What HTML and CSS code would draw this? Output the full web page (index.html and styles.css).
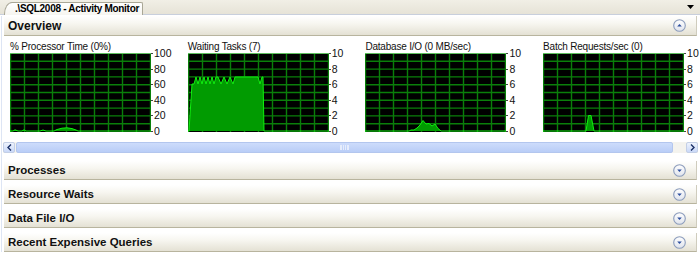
FILE: index.html
```html
<!DOCTYPE html>
<html>
<head>
<meta charset="utf-8">
<title>Activity Monitor</title>
<link rel="stylesheet" href="styles.css">
</head>
<body>
<div class="tabstrip">
  <div class="tab">.\SQL2008 - Activity Monitor</div>
  <svg class="tab-menu" width="7" height="4" viewBox="0 0 7 4"><path d="M0 0H7L3.5 4Z" fill="#000"/></svg>
</div>

<div class="panel">
  <div class="header first">
    <span class="htitle">Overview</span>
    <span class="toggle"><svg width="13" height="13" viewBox="0 0 13 13"><circle cx="6.5" cy="6.5" r="5.8" fill="url(#tg)" stroke="#8b9cbc" stroke-width="1.1"/><path d="M4.2 7.6H8.8L6.5 5Z" fill="#2d4f9e"/></svg></span>
  </div>

  <div class="charts">
    <div class="chart">
      <div class="chart-title">% Processor Time (0%)</div>
      <div class="chart-body">
        <svg class="plot" width="141" height="79" viewBox="0 0 141 79">
          <rect width="141" height="79" fill="#000"/>
          <path class="grid" d="M0.5 0V79M14.5 0V79M28.5 0V79M42.5 0V79M56.5 0V79M70.5 0V79M84.5 0V79M98.5 0V79M112.5 0V79M126.5 0V79M140.5 0V79M0 8.3H141M0 16.1H141M0 23.9H141M0 31.7H141M0 39.5H141M0 47.3H141M0 55.1H141M0 62.9H141M0 70.7H141"/>
          <path class="topline" d="M0 0.5H141"/>
          <path class="fill" d="M3 78L5 76.8L8 78L12 78L14 76.8L16 78L30 78L33 77L36 78L44 78L47 76.5L52 75.2L57 74.8L62 75.6L66 77L68 78Z"/>
          <path class="line" d="M0 78L3 78L5 76.8L8 78L12 78L14 76.8L16 78L30 78L33 77L36 78L44 78L47 76.5L52 75.2L57 74.8L62 75.6L66 77L68 78L141 78"/>
        </svg>
        <div class="axis"><span>100</span><span>80</span><span>60</span><span>40</span><span>20</span><span>0</span></div>
      </div>
    </div>

    <div class="chart">
      <div class="chart-title">Waiting Tasks (7)</div>
      <div class="chart-body">
        <svg class="plot" width="141" height="79" viewBox="0 0 141 79">
          <rect width="141" height="79" fill="#000"/>
          <path class="grid" d="M0.5 0V79M14.5 0V79M28.5 0V79M42.5 0V79M56.5 0V79M70.5 0V79M84.5 0V79M98.5 0V79M112.5 0V79M126.5 0V79M140.5 0V79M0 8.3H141M0 16.1H141M0 23.9H141M0 31.7H141M0 39.5H141M0 47.3H141M0 55.1H141M0 62.9H141M0 70.7H141"/>
          <path class="topline" d="M0 0.5H141"/>
          <path class="fill" d="M1 78L4 31L6 31L8 24L10 31L12 24L14 31L16 24L18 31L20 24L22 31L24 24L26 31L28 24L30 24L33 31L36 24L39 31L42 24L45 31L47 24L58 24L70 24L72 31L74 24L75 24L76 78Z"/>
          <path class="line" d="M0 78L1 78L4 31L6 31L8 24L10 31L12 24L14 31L16 24L18 31L20 24L22 31L24 24L26 31L28 24L30 24L33 31L36 24L39 31L42 24L45 31L47 24L58 24L70 24L72 31L74 24L75 24L76 78L141 78"/>
        </svg>
        <div class="axis"><span>10</span><span>8</span><span>6</span><span>4</span><span>2</span><span>0</span></div>
      </div>
    </div>

    <div class="chart">
      <div class="chart-title">Database I/O (0 MB/sec)</div>
      <div class="chart-body">
        <svg class="plot" width="141" height="79" viewBox="0 0 141 79">
          <rect width="141" height="79" fill="#000"/>
          <path class="grid" d="M0.5 0V79M14.5 0V79M28.5 0V79M42.5 0V79M56.5 0V79M70.5 0V79M84.5 0V79M98.5 0V79M112.5 0V79M126.5 0V79M140.5 0V79M0 8.3H141M0 16.1H141M0 23.9H141M0 31.7H141M0 39.5H141M0 47.3H141M0 55.1H141M0 62.9H141M0 70.7H141"/>
          <path class="topline" d="M0 0.5H141"/>
          <path class="fill" d="M44 78L46 77L49 77L52 75L55 72L58 67.5L61 71L64 70.5L67 73L70 71L73 75.5L76 78Z"/>
          <path class="line" d="M0 78L44 78L46 77L49 77L52 75L55 72L58 67.5L61 71L64 70.5L67 73L70 71L73 75.5L76 78L141 78"/>
        </svg>
        <div class="axis"><span>10</span><span>8</span><span>6</span><span>4</span><span>2</span><span>0</span></div>
      </div>
    </div>

    <div class="chart">
      <div class="chart-title">Batch Requests/sec (0)</div>
      <div class="chart-body">
        <svg class="plot" width="141" height="79" viewBox="0 0 141 79">
          <rect width="141" height="79" fill="#000"/>
          <path class="grid" d="M0.5 0V79M14.5 0V79M28.5 0V79M42.5 0V79M56.5 0V79M70.5 0V79M84.5 0V79M98.5 0V79M112.5 0V79M126.5 0V79M140.5 0V79M0 8.3H141M0 16.1H141M0 23.9H141M0 31.7H141M0 39.5H141M0 47.3H141M0 55.1H141M0 62.9H141M0 70.7H141"/>
          <path class="topline" d="M0 0.5H141"/>
          <path class="fill" d="M43 78L45.5 62.5L48 62.5L51 78Z"/>
          <path class="line" d="M0 78L43 78L45.5 62.5L48 62.5L51 78L141 78"/>
        </svg>
        <div class="axis"><span>10</span><span>8</span><span>6</span><span>4</span><span>2</span><span>0</span></div>
      </div>
    </div>
  </div>

  <div class="hscroll">
    <div class="sbtn left"><svg width="5" height="7" viewBox="0 0 5 7"><path d="M4 0.5L1 3.5L4 6.5" fill="none" stroke="#1b2f66" stroke-width="1.4"/></svg></div>
    <div class="thumb"><span class="grip"></span></div>
    <div class="track"></div>
    <div class="sbtn right"><svg width="5" height="7" viewBox="0 0 5 7"><path d="M1 0.5L4 3.5L1 6.5" fill="none" stroke="#1b2f66" stroke-width="1.4"/></svg></div>
  </div>

  <div class="header after-scroll">
    <span class="htitle">Processes</span>
    <span class="toggle"><svg width="13" height="13" viewBox="0 0 13 13"><circle cx="6.5" cy="6.5" r="5.8" fill="url(#tg)" stroke="#8b9cbc" stroke-width="1.1"/><path d="M4.2 5.4H8.8L6.5 8Z" fill="#2d4f9e"/></svg></span>
  </div>
  <div class="header">
    <span class="htitle">Resource Waits</span>
    <span class="toggle"><svg width="13" height="13" viewBox="0 0 13 13"><circle cx="6.5" cy="6.5" r="5.8" fill="url(#tg)" stroke="#8b9cbc" stroke-width="1.1"/><path d="M4.2 5.4H8.8L6.5 8Z" fill="#2d4f9e"/></svg></span>
  </div>
  <div class="header">
    <span class="htitle">Data File I/O</span>
    <span class="toggle"><svg width="13" height="13" viewBox="0 0 13 13"><circle cx="6.5" cy="6.5" r="5.8" fill="url(#tg)" stroke="#8b9cbc" stroke-width="1.1"/><path d="M4.2 5.4H8.8L6.5 8Z" fill="#2d4f9e"/></svg></span>
  </div>
  <div class="header">
    <span class="htitle">Recent Expensive Queries</span>
    <span class="toggle"><svg width="13" height="13" viewBox="0 0 13 13"><circle cx="6.5" cy="6.5" r="5.8" fill="url(#tg)" stroke="#8b9cbc" stroke-width="1.1"/><path d="M4.2 5.4H8.8L6.5 8Z" fill="#2d4f9e"/></svg></span>
  </div>
</div>

<svg class="defs" width="0" height="0">
  <defs>
    <linearGradient id="tg" x1="0" y1="0" x2="0" y2="1">
      <stop offset="0" stop-color="#ffffff"/>
      <stop offset="1" stop-color="#dfe3ec"/>
    </linearGradient>
  </defs>
</svg>
</body>
</html>
```

FILE: styles.css
```css
html, body {
  margin: 0;
  padding: 0;
  background: #ffffff;
  width: 700px;
  height: 253px;
  overflow: hidden;
  font-family: "Liberation Sans", Arial, sans-serif;
  color: #000;
}

.tabstrip {
  height: 14px;
  background: linear-gradient(#f1efe6, #e6e3d7);
  border-bottom: 1px solid #c8cfdc;
  display: flex;
  align-items: flex-end;
  padding-left: 4px;
  position: relative;
}

.tab {
  height: 13px;
  box-sizing: border-box;
  margin-bottom: -1px;
  padding: 0 3px 0 10px;
  background: linear-gradient(#ffffff, #f6f5f0);
  border: 1px solid #a9a796;
  border-bottom: none;
  border-top-left-radius: 8px 12px;
  border-top-right-radius: 2px;
  font-size: 10px;
  font-weight: bold;
  letter-spacing: -0.3px;
  line-height: 12px;
  white-space: nowrap;
}

.tab-menu {
  margin-left: auto;
  margin-right: 6px;
  align-self: center;
}

.panel {
  border-left: 1px solid #dde5f4;
  margin-left: 1px;
}

.header {
  height: 19px;
  box-sizing: border-box;
  margin: 5px 3px 0 2px;
  background: linear-gradient(#ffffff 0%, #f7f6f0 40%, #e4e1d4 100%);
  border-bottom: 1px solid #b8b49e;
  border-right: 1px solid #cfccbd;
  display: flex;
  align-items: center;
  padding: 0 10px 0 4px;
}

.header.first {
  height: 20px;
  margin-top: 1px;
}

.header.after-scroll {
  margin-top: 8px;
}

.htitle {
  font-size: 11.5px;
  font-weight: bold;
  color: #111;
}

.header.first .htitle {
  font-size: 12px;
}

.toggle {
  margin-left: auto;
  display: flex;
}

.charts {
  display: grid;
  grid-template-columns: repeat(4, 177.7px);
  padding: 5px 0 0 8px;
}

.chart-title {
  font-size: 10px;
  line-height: 12px;
  letter-spacing: -0.2px;
  white-space: nowrap;
  color: #111;
}

.chart-body {
  display: flex;
  align-items: flex-start;
}

.plot {
  display: block;
}

.grid {
  stroke: #0a7f0a;
  stroke-width: 1.4;
  fill: none;
}

.topline {
  stroke: #5fbf5f;
  stroke-width: 1;
}

.fill {
  fill: #019b01;
}

.line {
  fill: none;
  stroke: #10f010;
  stroke-width: 1;
}

.axis {
  display: flex;
  flex-direction: column;
  justify-content: space-between;
  height: 90px;
  margin-top: -6px;
  margin-bottom: -6px;
}

.axis span {
  display: block;
  font-size: 10.5px;
  line-height: 12px;
  height: 12px;
  color: #111;
  padding-left: 3px;
  position: relative;
}

.axis span::before {
  content: "";
  position: absolute;
  left: 0;
  top: 6px;
  width: 2px;
  height: 1px;
  background: #444;
}

.hscroll {
  display: flex;
  height: 11px;
  margin: 10px 2px 0 1px;
  background: #f4f3ee;
}

.sbtn {
  width: 12px;
  height: 11px;
  box-sizing: border-box;
  display: flex;
  align-items: center;
  justify-content: center;
  border: 1px solid #c3cfe6;
  border-radius: 2px;
  background: linear-gradient(#eef3fd, #c9d8f8);
}

.thumb {
  flex: 1;
  margin-left: 1px;
  border: 1px solid #b3c6ee;
  border-radius: 2px;
  background: linear-gradient(#cddcfb, #b9cdf7);
  display: flex;
  align-items: center;
  justify-content: center;
}

.grip {
  width: 7px;
  height: 5px;
  border-left: 1px solid #e6edfc;
  border-right: 1px solid #e6edfc;
  background: repeating-linear-gradient(90deg, #e6edfc 0 1px, transparent 1px 2px);
}

.track {
  width: 13px;
}

.defs {
  position: absolute;
  width: 0;
  height: 0;
}
```
